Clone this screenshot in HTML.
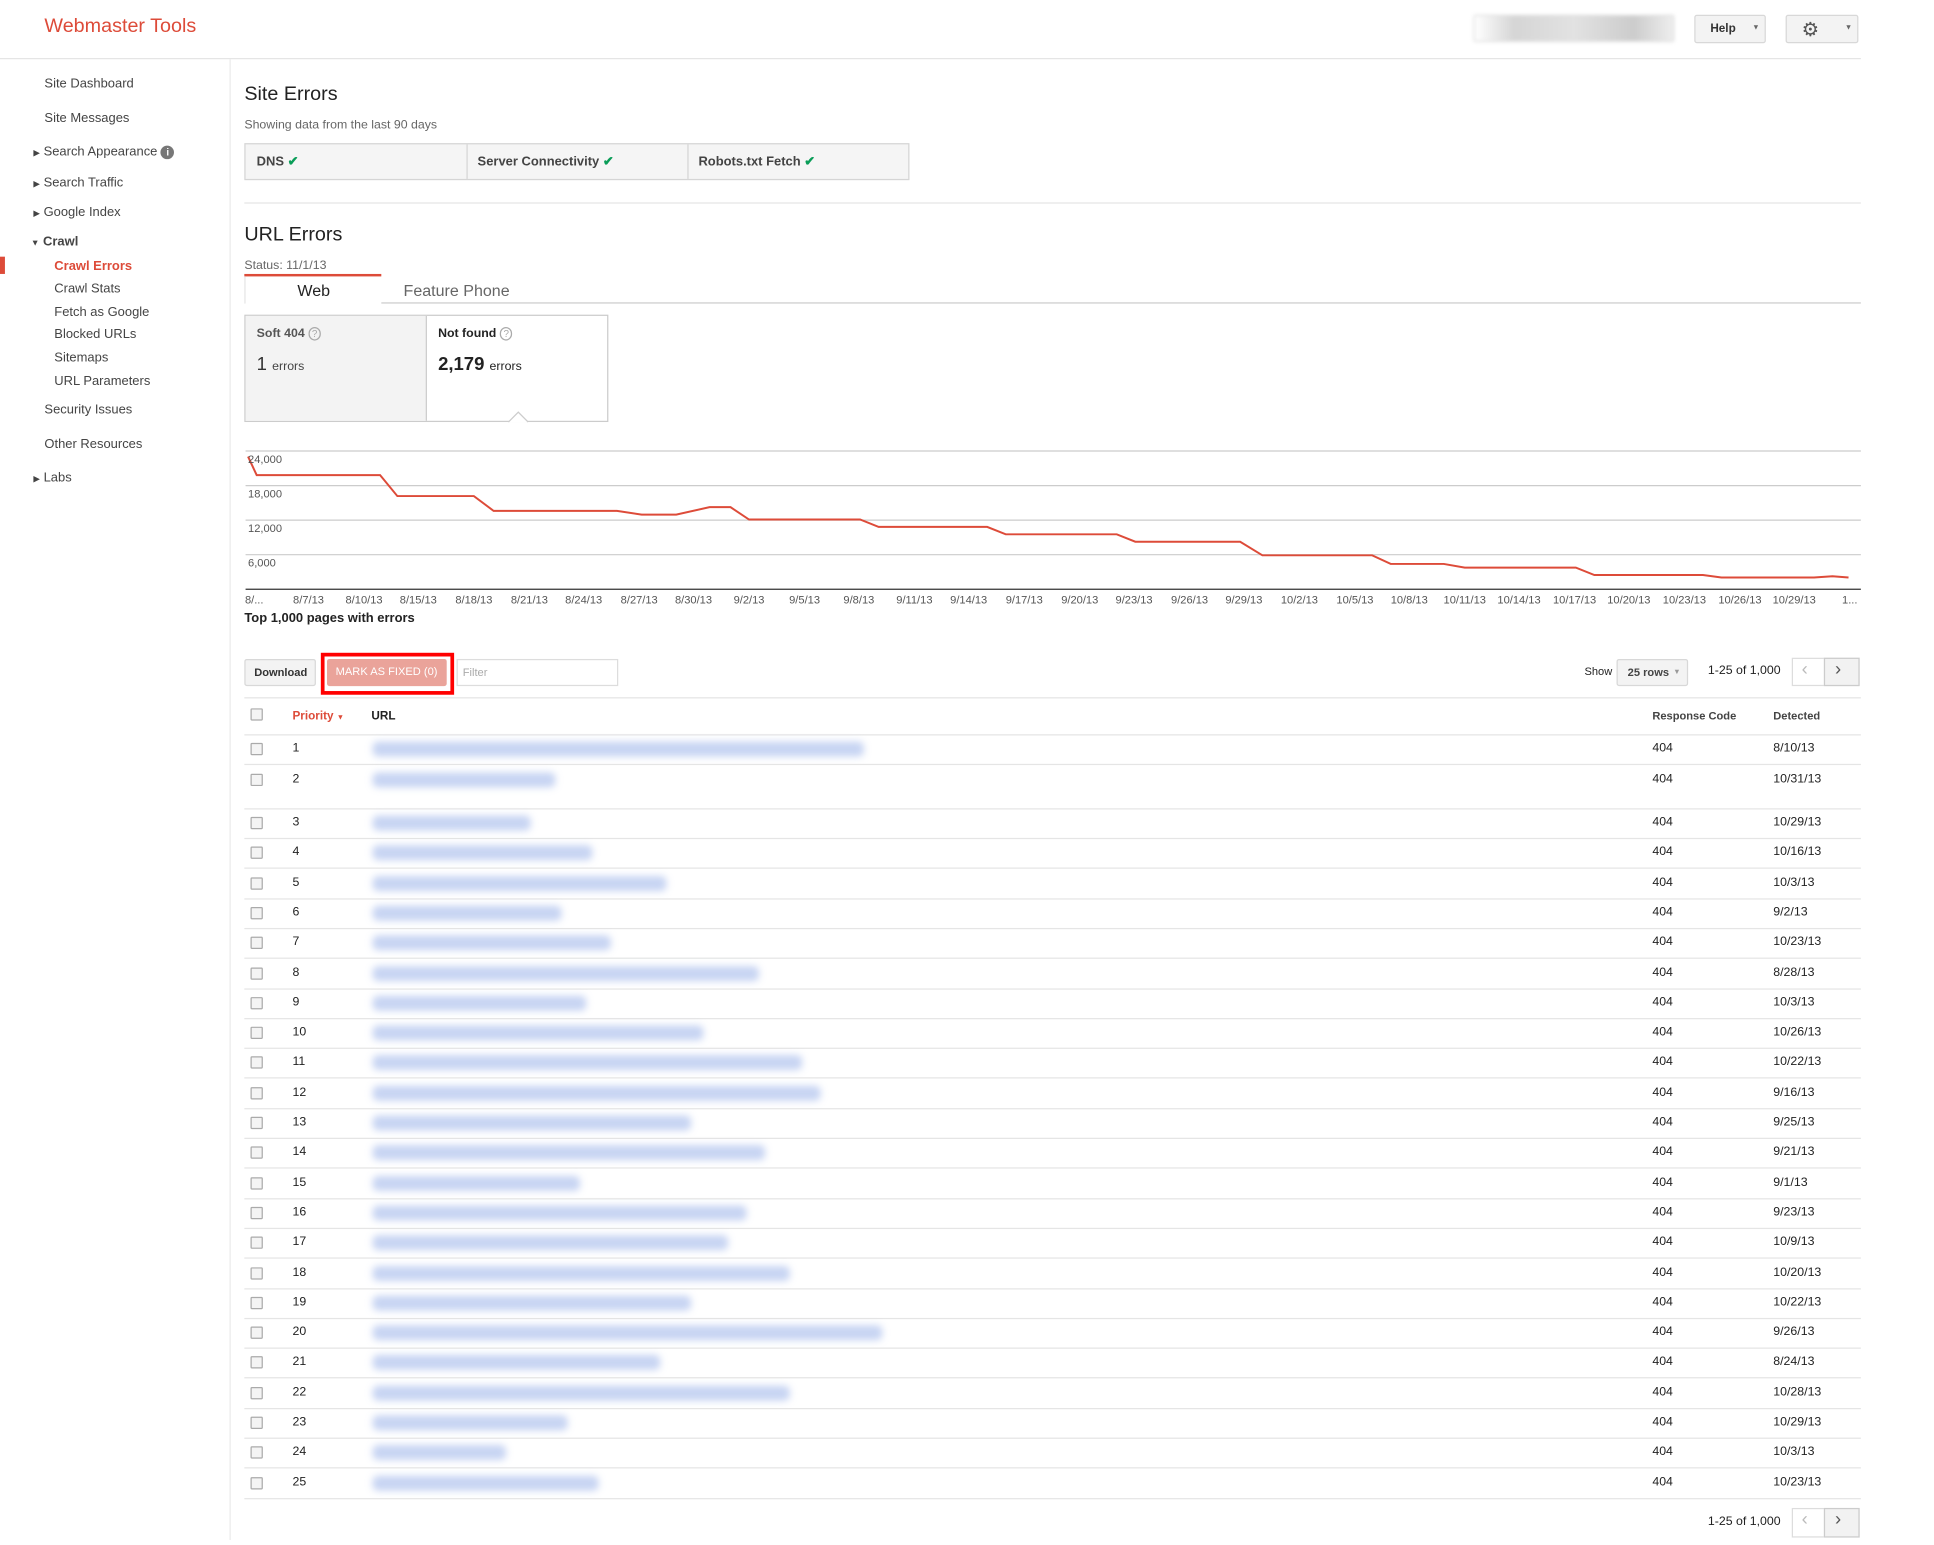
<!DOCTYPE html>
<html><head><meta charset="utf-8"><style>
*{margin:0;padding:0;box-sizing:border-box}
body{width:1934px;height:1543px;overflow:hidden;background:#fff;font-family:"Liberation Sans",Arial,sans-serif;color:#222}
#w{position:absolute;left:0;top:0;width:1570px;height:1252px;transform:scale(1.234);transform-origin:0 0}
.a{position:absolute;white-space:nowrap}
.nav{font-size:10.5px;color:#444}
.sub{font-size:10.5px;color:#444}
.hr{position:absolute;height:1px;background:#e5e5e5}
.btn{position:absolute;border:1px solid #d8d8d8;background:#f3f3f3;border-radius:2px}
.cb{position:absolute;width:10px;height:10px;border:1px solid #aaa;border-radius:1px;background:#f4f4f4}
.row{font-size:10px;color:#222}
.bl{position:absolute;height:12px;background:#8fa9e6;filter:blur(3px);opacity:.5;border-radius:4px}
.xl{position:absolute;top:481px;font-size:9px;color:#555;transform:translateX(-50%)}
.yl{position:absolute;left:201px;font-size:9px;color:#555}
</style></head><body><div id="w">
<div class="a" style="left:36px;top:13px;font-size:16px;color:#dd4b39">Webmaster Tools</div>
<div class="a" style="left:1194px;top:12px;width:163px;height:22px;border:1px solid #ddd;border-radius:2px;background:linear-gradient(90deg,#fff,#d5d5d5 20%,#e2e2e2 50%,#ccc 80%,#eee);filter:blur(1.5px)"></div>
<div class="btn" style="left:1373px;top:12px;width:58px;height:23px"><span class="a" style="left:12px;top:5px;font-size:9.5px;font-weight:bold;color:#333">Help</span><span class="a" style="left:46px;top:7px;font-size:6px;color:#666">▼</span></div>
<div class="btn" style="left:1447px;top:12px;width:59px;height:23px"><span class="a" style="left:12px;top:1px;font-size:16px;color:#555">⚙</span><span class="a" style="left:47px;top:7px;font-size:6px;color:#666">▼</span></div>
<div class="hr" style="left:0;top:47px;width:1508px"></div>
<div style="position:absolute;left:186px;top:48px;width:1px;height:1200px;background:#ebebeb"></div>
<div class="a nav" style="left:36px;top:62px">Site Dashboard</div>
<div class="a nav" style="left:36px;top:90px">Site Messages</div>
<div class="a nav" style="left:27px;top:117px"><span style="font-size:7px">▶</span> Search Appearance <span style="display:inline-block;width:11px;height:11px;border-radius:50%;background:#777;color:#fff;font-size:8px;text-align:center;line-height:11px;font-weight:bold">i</span></div>
<div class="a nav" style="left:27px;top:142px"><span style="font-size:7px">▶</span> Search Traffic</div>
<div class="a nav" style="left:27px;top:166px"><span style="font-size:7px">▶</span> Google Index</div>
<div class="a nav" style="left:25px;top:190px;font-weight:bold;color:#444"><span style="font-size:7px">▼</span> Crawl</div>
<div style="position:absolute;left:0;top:208px;width:4px;height:14px;background:#dd4b39"></div>
<div class="a sub" style="left:44px;top:210px;color:#dd4b39;font-weight:bold">Crawl Errors</div>
<div class="a sub" style="left:44px;top:228px">Crawl Stats</div>
<div class="a sub" style="left:44px;top:247px">Fetch as Google</div>
<div class="a sub" style="left:44px;top:265px">Blocked URLs</div>
<div class="a sub" style="left:44px;top:284px">Sitemaps</div>
<div class="a sub" style="left:44px;top:303px">URL Parameters</div>
<div class="a nav" style="left:36px;top:326px">Security Issues</div>
<div class="a nav" style="left:36px;top:354px">Other Resources</div>
<div class="a nav" style="left:27px;top:381px"><span style="font-size:7px">▶</span> Labs</div>

<div class="a" style="left:198px;top:68px;font-size:16px;color:#222">Site Errors</div>
<div class="a" style="left:198px;top:96px;font-size:10px;color:#666">Showing data from the last 90 days</div>
<div style="position:absolute;left:198px;top:116px;width:539px;height:30px;border:1px solid #d5d5d5;background:#f5f5f5"></div>
<div style="position:absolute;left:378px;top:117px;width:1px;height:28px;background:#d5d5d5"></div>
<div style="position:absolute;left:557px;top:117px;width:1px;height:28px;background:#d5d5d5"></div>
<div class="a" style="left:208px;top:125px;font-size:10.5px;font-weight:bold;color:#444">DNS <span style="color:#0a9d58">✔</span></div>
<div class="a" style="left:387px;top:125px;font-size:10.5px;font-weight:bold;color:#444">Server Connectivity <span style="color:#0a9d58">✔</span></div>
<div class="a" style="left:566px;top:125px;font-size:10.5px;font-weight:bold;color:#444">Robots.txt Fetch <span style="color:#0a9d58">✔</span></div>
<div class="hr" style="left:198px;top:164px;width:1310px"></div>
<div class="a" style="left:198px;top:182px;font-size:16px;color:#222">URL Errors</div>
<div class="a" style="left:198px;top:210px;font-size:10px;color:#666">Status: 11/1/13</div>
<div style="position:absolute;left:198px;top:222px;width:111px;height:2px;background:#dd4b39"></div>
<div style="position:absolute;left:309px;top:245px;width:1199px;height:1px;background:#ccc"></div>
<div style="position:absolute;left:198px;top:224px;width:1px;height:22px;background:#e5e5e5"></div>
<div class="a" style="left:241px;top:228px;font-size:13px;color:#222">Web</div>
<div class="a" style="left:327px;top:228px;font-size:13px;color:#666">Feature Phone</div>
<div style="position:absolute;left:198px;top:255px;width:295px;height:87px;border:1px solid #ccc;background:#fff"></div>
<div style="position:absolute;left:199px;top:256px;width:147px;height:85px;background:#f3f3f3;border-right:1px solid #ccc"></div>
<div class="a" style="left:208px;top:265px;font-size:10px;font-weight:bold;color:#555">Soft 404 <span style="font-weight:normal;color:#aaa;border:1px solid #aaa;border-radius:50%;font-size:8px;padding:0 2px">?</span></div>
<div class="a" style="left:208px;top:287px;font-size:15px;color:#333">1 <span style="font-size:10px;color:#444">errors</span></div>
<div class="a" style="left:355px;top:265px;font-size:10px;font-weight:bold;color:#222">Not found <span style="font-weight:normal;color:#aaa;border:1px solid #aaa;border-radius:50%;font-size:8px;padding:0 2px">?</span></div>
<div class="a" style="left:355px;top:287px;font-size:15px;color:#222;font-weight:bold">2,179 <span style="font-size:10px;color:#222;font-weight:normal">errors</span></div>
<svg style="position:absolute;left:412px;top:333px" width="16" height="10"><polyline points="0,9 8,1 16,9" fill="#fff" stroke="#ccc"/></svg>

<svg style="position:absolute;left:0;top:0" width="1550" height="500">
<g stroke="#ccc" stroke-width="1"><line x1="199" y1="365.5" x2="1508" y2="365.5"/><line x1="199" y1="393.5" x2="1508" y2="393.5"/><line x1="199" y1="421.5" x2="1508" y2="421.5"/><line x1="199" y1="449.5" x2="1508" y2="449.5"/></g>
<line x1="199" y1="477.5" x2="1508" y2="477.5" stroke="#333"/>
<polyline fill="none" stroke="#dd4b39" stroke-width="1.6" points="201,370 208,385 308,385 322,402 384,402 400,414 500,414 520,417 548,417 575,411 592,411 607,421 697,421 712,427 800,427 815,433 905,433 920,439 1005,439 1023,450 1112,450 1127,457 1170,457 1187,460 1277,460 1292,466 1380,466 1395,468 1470,468 1485,467 1498,468"/>
</svg>
<div class="yl" style="top:367px">24,000</div><div class="yl" style="top:395px">18,000</div><div class="yl" style="top:423px">12,000</div><div class="yl" style="top:451px">6,000</div>
<div class="xl" style="left:206px">8/...</div>
<div class="xl" style="left:250px">8/7/13</div><div class="xl" style="left:295px">8/10/13</div><div class="xl" style="left:339px">8/15/13</div><div class="xl" style="left:384px">8/18/13</div><div class="xl" style="left:429px">8/21/13</div><div class="xl" style="left:473px">8/24/13</div><div class="xl" style="left:518px">8/27/13</div><div class="xl" style="left:562px">8/30/13</div><div class="xl" style="left:607px">9/2/13</div><div class="xl" style="left:652px">9/5/13</div><div class="xl" style="left:696px">9/8/13</div><div class="xl" style="left:741px">9/11/13</div><div class="xl" style="left:785px">9/14/13</div><div class="xl" style="left:830px">9/17/13</div><div class="xl" style="left:875px">9/20/13</div><div class="xl" style="left:919px">9/23/13</div><div class="xl" style="left:964px">9/26/13</div><div class="xl" style="left:1008px">9/29/13</div><div class="xl" style="left:1053px">10/2/13</div><div class="xl" style="left:1098px">10/5/13</div><div class="xl" style="left:1142px">10/8/13</div><div class="xl" style="left:1187px">10/11/13</div><div class="xl" style="left:1231px">10/14/13</div><div class="xl" style="left:1276px">10/17/13</div><div class="xl" style="left:1320px">10/20/13</div><div class="xl" style="left:1365px">10/23/13</div><div class="xl" style="left:1410px">10/26/13</div><div class="xl" style="left:1454px">10/29/13</div><div class="xl" style="left:1499px">1...</div>
<div class="a" style="left:198px;top:495px;font-size:10.5px;font-weight:bold;color:#222">Top 1,000 pages with errors</div>

<div class="btn" style="left:198px;top:534px;width:58px;height:22px"><span class="a" style="left:7px;top:5px;font-size:9px;font-weight:bold;color:#333">Download</span></div>
<div style="position:absolute;left:260px;top:529px;width:108px;height:34px;border:3px solid #f00"></div>
<div style="position:absolute;left:265px;top:534px;width:97px;height:22px;background:#eaa39a;border-radius:2px"></div>
<div class="a" style="left:272px;top:539px;font-size:9px;color:#fff">MARK AS FIXED (0)</div>
<div style="position:absolute;left:370px;top:534px;width:131px;height:22px;border:1px solid #ddd"></div>
<div class="a" style="left:375px;top:540px;font-size:9px;color:#aaa">Filter</div>
<div class="a" style="left:1284px;top:539px;font-size:9px;color:#222">Show</div>
<div class="btn" style="left:1310px;top:534px;width:58px;height:22px"><span class="a" style="left:8px;top:5px;font-size:9px;font-weight:bold;color:#444">25 rows</span><span class="a" style="left:45px;top:7px;font-size:6px;color:#999">▼</span></div>
<div class="a" style="left:1384px;top:538px;font-size:10px;color:#222">1-25 of 1,000</div>
<div style="position:absolute;left:1452px;top:533px;width:55px;height:23px;border:1px solid #ddd"></div>
<div style="position:absolute;left:1478px;top:533px;width:29px;height:23px;border:1px solid #ccc;background:#f2f2f2"></div>
<div class="a" style="left:1460px;top:534px;font-size:15px;color:#bbb">‹</div>
<div class="a" style="left:1487px;top:534px;font-size:15px;color:#555">›</div>
<div class="hr" style="left:198px;top:565px;width:1310px"></div>
<div class="cb" style="left:203px;top:574px"></div>
<div class="a" style="left:237px;top:575px;font-size:9.5px;color:#dd4b39;font-weight:bold">Priority <span style="font-size:6px">▼</span></div>
<div class="a" style="left:301px;top:575px;font-size:9.5px;font-weight:bold;color:#222">URL</div>
<div class="a" style="left:1339px;top:575px;font-size:9px;font-weight:bold;color:#444">Response Code</div>
<div class="a" style="left:1437px;top:575px;font-size:9px;font-weight:bold;color:#444">Detected</div>
<div class="hr" style="left:198px;top:595px;width:1310px"></div>
<div id="rows"></div>
<div class="a" style="left:1384px;top:1228px;font-size:10px;color:#222">1-25 of 1,000</div>
<div style="position:absolute;left:1452px;top:1222px;width:55px;height:24px;border:1px solid #ddd"></div>
<div style="position:absolute;left:1478px;top:1222px;width:29px;height:24px;border:1px solid #ccc;background:#f2f2f2"></div>
<div class="a" style="left:1460px;top:1223px;font-size:15px;color:#bbb">‹</div>
<div class="a" style="left:1487px;top:1223px;font-size:15px;color:#555">›</div>
</div>
<script>
var d=["8/10/13","10/31/13","10/29/13","10/16/13","10/3/13","9/2/13","10/23/13","8/28/13","10/3/13","10/26/13","10/22/13","9/16/13","9/25/13","9/21/13","9/1/13","9/23/13","10/9/13","10/20/13","10/22/13","9/26/13","8/24/13","10/28/13","10/29/13","10/3/13","10/23/13"];
var e=[700,450,430,480,540,455,495,615,475,570,650,665,560,620,470,605,590,640,560,715,535,640,460,410,485];
var h="";
for(var i=0;i<25;i++){var y=i<2?607+i*25:667+(i-2)*24.3;
h+='<div class="cb" style="left:203px;top:'+(y-5)+'px"></div>';
h+='<div class="a row" style="left:237px;top:'+(y-6)+'px">'+(i+1)+'</div>';
h+='<div class="bl" style="left:302px;top:'+(y-6)+'px;width:'+(e[i]-302)+'px"></div>';
h+='<div class="a row" style="left:1339px;top:'+(y-6)+'px">404</div>';
h+='<div class="a row" style="left:1437px;top:'+(y-6)+'px">'+d[i]+'</div>';
var ly=(i==1)?655:y+12;
h+='<div class="hr" style="left:198px;top:'+ly+'px;width:1310px"></div>';}
document.getElementById("rows").outerHTML=h;
</script>
</body></html>
